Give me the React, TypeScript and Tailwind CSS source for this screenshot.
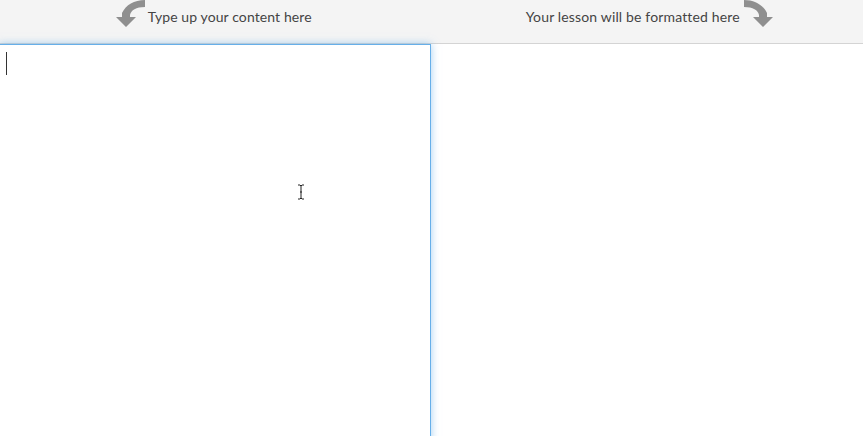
import React from 'react';

function ArrowLeftDown() {
  return (
    <svg width="30" height="28" viewBox="0 0 30 28" className="shrink-0">
      <path d="M29 0 C 18 0, 10 5, 6 13 L 6 17 L 0 17 L 10 27 L 20 17 L 14 17 L 14 15 C 15 10, 20 7, 29 7 Z" fill="#8f8f8f" />
    </svg>
  );
}

function ArrowRightDown() {
  return (
    <svg width="30" height="28" viewBox="0 0 30 28" className="shrink-0">
      <path d="M1 0 C 12 0, 20 5, 24 13 L 24 17 L 30 17 L 20 27 L 10 17 L 16 17 L 16 15 C 15 10, 10 7, 1 7 Z" fill="#8f8f8f" />
    </svg>
  );
}

export default function App() {
  return (
    <div className="min-h-screen bg-white font-['Lato','Open_Sans',sans-serif] text-[14px] text-[#444] overflow-hidden">
      <div className="flex h-[44px] bg-[#f4f4f4] border-b border-[#d4d4d4]">
        <div className="flex-1 flex justify-center items-start">
          <div className="flex items-start gap-[2px] ml-[-4px]">
            <ArrowLeftDown />
            <span className="pt-[7px] leading-[20px] tracking-[0.1px]">Type up your content here</span>
          </div>
        </div>
        <div className="flex-1 flex justify-center items-start">
          <div className="flex items-start gap-[3px] ml-[4px]">
            <span className="pt-[7px] leading-[20px] tracking-[0.15px]">Your lesson will be formatted here</span>
            <ArrowRightDown />
          </div>
        </div>
      </div>
      <div className="flex">
        <div className="relative w-[432px] -ml-px h-[400px] border border-[#66afe9] shadow-[0_0_8px_rgba(102,175,233,0.6)] bg-white">
          <div className="absolute left-[6px] top-[7px] w-px h-[23px] bg-[#333]" />
          <svg className="absolute left-[296px] top-[139px]" width="10" height="16" viewBox="0 0 10 16">
            <path d="M2 1 H4 L5 2 L6 1 H8 M5 2 V14 M2 15 H4 L5 14 L6 15 H8 M4 8 H6" stroke="#222" strokeWidth="1" fill="none" />
          </svg>
        </div>
        <div className="flex-1" />
      </div>
    </div>
  );
}
